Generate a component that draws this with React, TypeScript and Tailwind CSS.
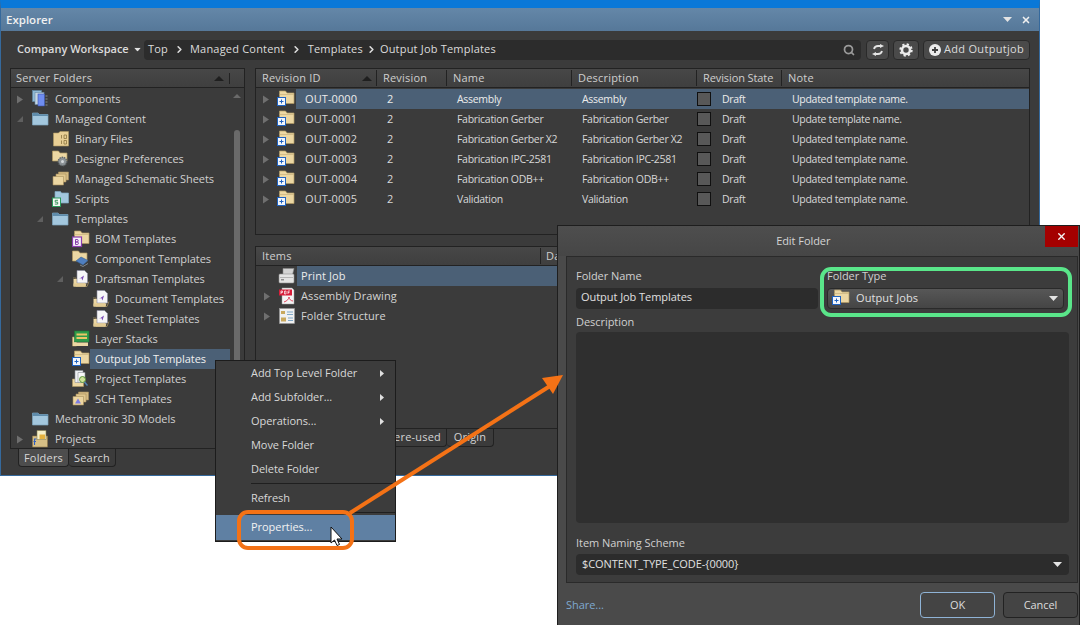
import { ChevronRight, Search, X } from 'lucide-react';

const font = '[font-family:"Open_Sans","Noto_Sans",sans-serif]';

type IconKind =
    | 'components' | 'blue' | 'binary' | 'prefs' | 'sheets' | 'scripts' | 'bom' | 'comp'
    | 'draftsman' | 'doc' | 'layers' | 'out' | 'project' | 'sch' | 'projects'
    | 'print' | 'pdf' | 'struct';

const Yellow = () => (
    <>
        <path d="M2.500 1h6l1.500 2h7v10.500H2.500z" fill="#ecd7a3" stroke="#b09862" strokeWidth="0.700" />
        <path d="M2.500 4.500h14.500" stroke="#c8b27c" strokeWidth="0.700" />
    </>
);

const Blue = () => (
    <>
        <path d="M0.500 3h5.500l1 1.500h9v10.500H0.500z" fill="#a3c7de" stroke="#7ea6c0" strokeWidth="0.700" />
        <path d="M0.500 3h5.500l1 1.500h9v1.500H0.500z" fill="#5f8cab" />
    </>
);

const Paper = () => (
    <>
        <path d="M1 8h3v8.500h11l2-5" fill="none" stroke="#b09862" strokeWidth="0.700" />
        <path d="M1.500 9h12v7.500H1.500z" fill="#ecd7a3" />
        <path d="M5 0.500h7.500l3 3V13H5z" fill="#f6f6f8" stroke="#8a8aa0" strokeWidth="0.600" />
        <path d="M7 9l5-3.500-1.500 5-1.200-2.500z" fill="#7a4bb5" />
        <path d="M1.500 13.500h13l-1 3h-12z" fill="#e2cb94" />
    </>
);

const Icon = ({ kind }: { kind: IconKind }) => (
    <svg width="18" height="18" viewBox="0 0 18 18" className="shrink-0">
        {kind === 'components' && (
            <>
                <rect x="0.500" y="0.500" width="9" height="11" fill="#8fb9d6" stroke="#5e86a3" strokeWidth="0.600" />
                <rect x="3" y="2.500" width="9" height="12" fill="#c6d6e2" stroke="#6a8aa5" strokeWidth="0.600" />
                <rect x="6" y="4" width="6.500" height="12" fill="#6f8df0" stroke="#3a53b0" strokeWidth="0.600" />
                <path d="M13.500 6h2M13.500 9h2M13.500 12h2M13.500 15h2" stroke="#9aa4a8" strokeWidth="0.800" />
            </>
        )}
        {kind === 'blue' && <Blue />}
        {kind === 'binary' && (
            <>
                <path d="M1.500 3h5l1.500-1.500h8.500V16H1.500z" fill="#e8cf95" stroke="#b09862" strokeWidth="0.600" />
                <path d="M9.500 5v3.500M12 5h2.500v3.500H12zM9.500 10.500V14M12 10.500h2.500V14H12z" fill="none" stroke="#8c7540" strokeWidth="0.800" />
            </>
        )}
        {kind === 'prefs' && (
            <>
                <path d="M0.500 1h6l1.500 2h7v8H0.500z" fill="#ecd7a3" stroke="#b09862" strokeWidth="0.700" />
                <circle cx="10.500" cy="11.500" r="4.200" fill="#8d9397" stroke="#62686b" strokeWidth="1.400" strokeDasharray="1.500 0.800" />
                <circle cx="10.500" cy="11.500" r="1.500" fill="#d4d8da" />
            </>
        )}
        {(kind === 'sheets' || kind === 'sch') && (
            <>
                <path d="M6.500 2h10v8h-10z" fill="#d5bb84" stroke="#a88f5c" strokeWidth="0.600" />
                <path d="M4 4h10v8H4z" fill="#e0c78e" stroke="#a88f5c" strokeWidth="0.600" />
                <path d="M1 6.500h10.500v8.500H1z" fill="#ecd6a2" stroke="#a88f5c" strokeWidth="0.600" />
                {kind === 'sch' && <path d="M3 13.500l3-5 3 5z" fill="#7d7de0" />}
            </>
        )}
        {kind === 'scripts' && (
            <>
                <path d="M3 1.500h5.500l1 1.500H16.500v10H3z" fill="#a3c7de" stroke="#7ea6c0" strokeWidth="0.700" />
                <rect x="0.500" y="8" width="8" height="8.500" fill="#f4f8f4" stroke="#2b9a5a" strokeWidth="1" />
                <path d="M6 10.300H3.200v1.900h2.500v1.900H2.800" fill="none" stroke="#2b8a50" strokeWidth="0.900" />
            </>
        )}
        {kind === 'bom' && (
            <>
                <Yellow />
                <rect x="0.500" y="7" width="9" height="9.500" fill="#f6f0fa" stroke="#8a3fb0" strokeWidth="1.200" />
                <path d="M3.500 9.500v5h1.700a1.200 1.200 0 0 0 0-2.500H3.500h1.500a1.200 1.200 0 0 0 0-2.500z" fill="none" stroke="#7a2fa0" strokeWidth="0.900" />
            </>
        )}
        {kind === 'comp' && (
            <>
                <path d="M0.500 1h6l1.500 2h7v8H0.500z" fill="#ecd7a3" stroke="#b09862" strokeWidth="0.700" />
                <path d="M4 11l5-4 7 3.500-5 4.500z" fill="#4f7fc0" stroke="#38608f" strokeWidth="0.600" />
                <path d="M8 15l3 1.500 5-3" fill="none" stroke="#7f8890" strokeWidth="1" />
            </>
        )}
        {(kind === 'draftsman' || kind === 'doc') && <Paper />}
        {kind === 'layers' && (
            <>
                <path d="M0.500 7h4v9H0.500z" fill="#ecd7a3" stroke="#b09862" strokeWidth="0.600" />
                <rect x="2.500" y="1" width="14.500" height="11" fill="#2f9a4a" stroke="#1d7434" strokeWidth="0.600" />
                <path d="M4.500 4.500h10.500M4.500 8h10.500" stroke="#ecc566" strokeWidth="2" />
                <path d="M1 12.500h15v3.500H1z" fill="#ecd7a3" />
            </>
        )}
        {kind === 'out' && (
            <>
                <Yellow />
                <rect x="0.500" y="7.500" width="8" height="8" fill="#f2f6fc" stroke="#1f62c0" strokeWidth="1" />
                <path d="M2.500 11.500h4M4.500 9.500v4" stroke="#1f62c0" strokeWidth="1" />
            </>
        )}
        {kind === 'project' && (
            <>
                <path d="M0.500 9h11v7.500H0.500z" fill="#ecd7a3" stroke="#b09862" strokeWidth="0.600" />
                <path d="M3 0.500h8v12H3z" fill="#eef0f2" stroke="#8a8f96" strokeWidth="0.600" />
                <path d="M6 2.500h7v10H6z" fill="#f8f8f8" stroke="#8a8f96" strokeWidth="0.600" />
                <circle cx="10.500" cy="9.500" r="3" fill="#cfe29a" stroke="#4f8f2f" strokeWidth="0.900" />
                <path d="M12.500 12l3 3.500" stroke="#4f7faf" strokeWidth="1.500" />
            </>
        )}
        {kind === 'projects' && (
            <>
                <path d="M0.500 6h15v11h-15z" fill="#d6bf86" stroke="#8f7748" strokeWidth="0.600" />
                <path d="M5 0.500h9v9H5z" fill="#f6f0c8" stroke="#8a7f50" strokeWidth="0.600" />
                <rect x="7.500" y="4.500" width="5.500" height="4.500" fill="#e5b23e" />
                <path d="M4.500 9H2.500v6M1.500 11.500H4" fill="none" stroke="#2f5fc0" strokeWidth="1.100" />
            </>
        )}
        {kind === 'print' && (
            <>
                <path d="M5 1.500h11l-1.500 6H5z" fill="#d4d4d4" stroke="#8f8f8f" strokeWidth="0.600" />
                <rect x="1" y="7" width="15" height="9" rx="1" fill="#e4e4e4" stroke="#8f8f8f" strokeWidth="0.600" />
                <path d="M2 10.500h13" stroke="#a8a8a8" strokeWidth="0.800" />
                <rect x="3" y="12" width="3" height="1.500" fill="#8f8f8f" />
            </>
        )}
        {kind === 'pdf' && (
            <>
                <path d="M4 1h10l2 2v14H4z" fill="#f5f5f5" stroke="#a0a0a0" strokeWidth="0.500" />
                <rect x="1" y="2.500" width="13" height="6" fill="#d81e3a" />
                <path d="M3 7V4h1.500v1.500H3M6.500 4v3h1.500V4zM10 7V4h2M10 5.500h1.500" fill="none" stroke="#ffffff" strokeWidth="0.700" />
                <path d="M6 15c3-1 5-3 5-5 0 2 2 4 4 4" fill="none" stroke="#d81e3a" strokeWidth="0.800" />
            </>
        )}
        {kind === 'struct' && (
            <>
                <rect x="1.500" y="1.500" width="15" height="15" fill="#f0f0f0" stroke="#9a9a9a" strokeWidth="0.600" />
                <rect x="3" y="4" width="4" height="3" fill="#c9a85c" />
                <rect x="3" y="10.500" width="5" height="4" fill="#c9a85c" />
                <path d="M9 5h6M9 7.500h6M10 11h5M10 13.500h5" stroke="#7fa7c7" strokeWidth="1" />
            </>
        )}
    </svg>
);

const Tri = ({ open }: { open?: boolean }) =>
    open ? (
        <svg width="8" height="8" viewBox="0 0 8 8"><path d="M7 1v6H1z" fill="#5f5f5f" /></svg>
    ) : (
        <svg width="8" height="9" viewBox="0 0 8 9"><path d="M1 0.500l6 4-6 4z" fill="#6f6f6f" /></svg>
    );

const Caret = ({ className }: { className?: string }) => (
    <svg width="9" height="5" viewBox="0 0 9 5" className={className}><path d="M0 0h9L4.500 5z" fill="#e4e4e4" /></svg>
);

const SortUp = () => (
    <svg width="10" height="5" viewBox="0 0 10 5"><path d="M0 5h10L5 0z" fill="#1f1f1f" /></svg>
);

const indent = ['pl-0', 'pl-[20px]', 'pl-[40px]', 'pl-[60px]'];

const tree: { label: string; level: number; icon: IconKind; arrow?: 'open' | 'closed'; selected?: boolean }[] = [
    { label: 'Components', level: 0, icon: 'components', arrow: 'closed' },
    { label: 'Managed Content', level: 0, icon: 'blue', arrow: 'open' },
    { label: 'Binary Files', level: 1, icon: 'binary' },
    { label: 'Designer Preferences', level: 1, icon: 'prefs' },
    { label: 'Managed Schematic Sheets', level: 1, icon: 'sheets' },
    { label: 'Scripts', level: 1, icon: 'scripts' },
    { label: 'Templates', level: 1, icon: 'blue', arrow: 'open' },
    { label: 'BOM Templates', level: 2, icon: 'bom' },
    { label: 'Component Templates', level: 2, icon: 'comp' },
    { label: 'Draftsman Templates', level: 2, icon: 'draftsman', arrow: 'open' },
    { label: 'Document Templates', level: 3, icon: 'doc' },
    { label: 'Sheet Templates', level: 3, icon: 'doc' },
    { label: 'Layer Stacks', level: 2, icon: 'layers' },
    { label: 'Output Job Templates', level: 2, icon: 'out', selected: true },
    { label: 'Project Templates', level: 2, icon: 'project' },
    { label: 'SCH Templates', level: 2, icon: 'sch' },
    { label: 'Mechatronic 3D Models', level: 0, icon: 'blue' },
    { label: 'Projects', level: 0, icon: 'projects', arrow: 'closed' },
];

const revisions = [
    ['OUT-0000', 'Assembly', 'Assembly', 'Updated template name.'],
    ['OUT-0001', 'Fabrication Gerber', 'Fabrication Gerber', 'Update template name.'],
    ['OUT-0002', 'Fabrication Gerber X2', 'Fabrication Gerber X2', 'Updated template name.'],
    ['OUT-0003', 'Fabrication IPC-2581', 'Fabrication IPC-2581', 'Updated template name.'],
    ['OUT-0004', 'Fabrication ODB++', 'Fabrication ODB++', 'Updated template name.'],
    ['OUT-0005', 'Validation', 'Validation', 'Updated template name.'],
];

const items: { label: string; icon: IconKind; arrow?: boolean; selected?: boolean }[] = [
    { label: 'Print Job', icon: 'print', selected: true },
    { label: 'Assembly Drawing', icon: 'pdf', arrow: true },
    { label: 'Folder Structure', icon: 'struct', arrow: true },
];

const menuItems = [
    { label: 'Add Top Level Folder', sub: true },
    { label: 'Add Subfolder...', sub: true },
    { label: 'Operations...', sub: true },
    { label: 'Move Folder' },
    { label: 'Delete Folder' },
];

const headerBg = 'bg-gradient-to-b from-[#474747] to-[#3f3f3f]';
const toolBtn = 'h-[20px] flex items-center justify-center rounded-[4px] border border-[#2a2a2a] bg-[#4a4a4a]';

const Explorer = () => (
    <div className="absolute left-0 top-0 w-[1040px] h-[476px] flex flex-col border-x border-b border-[#35699c] border-t-[8px] border-t-[#0a78d8] bg-[#3b3b3b]">
        {/* Title */}
        <div className="h-[23px] shrink-0 flex items-center justify-between pl-[5px] pr-[8px] bg-gradient-to-b from-[#6487a8] to-[#567899]">
            <span className="text-[11.500px] font-semibold text-[#f0f0f0]">Explorer</span>
            <div className="flex items-center gap-[9px]">
                <Caret />
                <X className="w-[10px] h-[10px] text-[#f0f0f0]" strokeWidth={4} />
            </div>
        </div>

        {/* Toolbar */}
        <div className="h-[37px] shrink-0 flex items-center pl-[16px] pr-[9px]">
            <span className="w-[116px] text-[11px] font-semibold text-[#dcdcdc]">Company Workspace</span>
            <Caret className="scale-75" />
            <div className="ml-[2px] w-[717px] h-[20px] flex items-center justify-between pl-[4px] pr-[3px] rounded-[4px] bg-[#2c2c2c] text-[11px] text-[#dcdcdc] tracking-[0.2px]">
                <div className="flex items-center">
                    <span>Top</span>
                    <ChevronRight className="w-[11px] h-[11px] ml-[6px] mr-[5px]" strokeWidth={3.500} />
                    <span>Managed Content</span>
                    <ChevronRight className="w-[11px] h-[11px] mx-[6px]" strokeWidth={3.500} />
                    <span>Templates</span>
                    <ChevronRight className="w-[11px] h-[11px] mx-[3px]" strokeWidth={3.500} />
                    <span>Output Job Templates</span>
                </div>
                <Search className="w-[12px] h-[12px] mr-[3px] text-[#9a9a9a]" strokeWidth={3.500} />
            </div>
            <button className={`ml-[5px] w-[23px] ${toolBtn}`}>
                <svg width="14" height="12" viewBox="0 0 14 12" fill="none" stroke="#e6e6e6" strokeWidth="1.800">
                    <path d="M3 5c.5-2 2-3 4-3h3" />
                    <path d="M9 0l4 2-4 2z" fill="#e6e6e6" stroke="none" />
                    <path d="M11 7c-.5 2-2 3-4 3H4" />
                    <path d="M5 8l-4 2 4 2z" fill="#e6e6e6" stroke="none" />
                </svg>
            </button>
            <button className={`ml-[4px] w-[26px] ${toolBtn}`}>
                <svg width="14" height="14" viewBox="0 0 14 14" fill="none" stroke="#ececec">
                    <circle cx="7" cy="7" r="4" strokeWidth="2.600" />
                    <circle cx="7" cy="7" r="5.700" strokeWidth="2" strokeDasharray="2.200 2.280" />
                </svg>
            </button>
            <button className={`ml-[4px] w-[107px] gap-[3px] text-[11px] text-[#dcdcdc] tracking-[0.3px] ${toolBtn}`}>
                <svg width="12" height="12" viewBox="0 0 12 12">
                    <circle cx="6" cy="6" r="6" fill="#ececec" />
                    <path d="M6 3v6M3 6h6" stroke="#3f3f3f" strokeWidth="1.800" />
                </svg>
                Add Outputjob
            </button>
        </div>

        <div className="flex-1 flex gap-[10px] px-[9px] min-h-0">
            {/* Server folders */}
            <div className="w-[235px] shrink-0 flex flex-col">
                <div className="h-[381px] flex flex-col border border-[#222222]">
                    <div className={`h-[19px] shrink-0 flex items-center border-b border-[#222222] pl-[5px] text-[11px] text-[#cfcfcf] tracking-[0.2px] ${headerBg}`}>
                        <span className="flex-1">Server Folders</span>
                        <SortUp />
                        <div className="ml-[5px] mr-[14px] w-px h-[11px] bg-[#222222]" />
                    </div>
                    <div className="flex-1 flex min-h-0">
                        <div className="flex-1 pt-[1px] min-w-0">
                            {tree.map((row) => (
                                <div key={row.label} className={`h-[20px] flex items-center text-[11px] tracking-[-0.05px] ${indent[row.level]}`}>
                                    <span className="w-[18px] shrink-0 flex justify-center">
                                        {row.arrow && <Tri open={row.arrow === 'open'} />}
                                    </span>
                                    <span className="ml-[3px] flex">
                                        <Icon kind={row.icon} />
                                    </span>
                                    <span className={`flex-1 h-full flex items-center pl-[5px] ${row.selected ? 'bg-[#4b6076] text-[#f0f0f0]' : 'text-[#d0d0d0]'}`}>
                                        {row.label}
                                    </span>
                                </div>
                            ))}
                        </div>
                        <div className="w-[14px] shrink-0 flex flex-col items-center pt-[6px]">
                            <svg width="8" height="4" viewBox="0 0 8 4"><path d="M0 4h8L4 0z" fill="#6a6a6a" /></svg>
                            <div className="mt-[32px] w-[6px] h-[283px] bg-[#6a6a6a] rounded-[3px]" />
                        </div>
                    </div>
                </div>
                <div className="flex pl-[8px] text-[11px] text-[#d8d8d8] tracking-[0.2px]">
                    <div className="w-[51px] h-[18px] pt-[1px] flex items-center justify-center bg-[#4d4d4d] border border-t-0 border-[#222222] rounded-b-[4px]">Folders</div>
                    <div className="w-[47px] h-[18px] pt-[1px] flex items-center justify-center bg-[#3b3b3b] border border-l-0 border-t-0 border-[#222222] rounded-b-[4px]">Search</div>
                </div>
            </div>

            <div className="flex-1 flex flex-col min-w-0">
                {/* Revisions */}
                <div className="h-[167px] shrink-0 flex flex-col border border-[#222222]">
                    <div className={`h-[19px] shrink-0 flex items-center border-b border-[#222222] text-[11px] text-[#cfcfcf] tracking-[0.2px] ${headerBg}`}>
                        <div className="w-[121px] flex items-center pl-[6px] pr-[4px] justify-between border-r border-[#222222]">Revision ID<SortUp /></div>
                        <div className="w-[70px] pl-[6px] border-r border-[#222222]">Revision</div>
                        <div className="w-[125px] pl-[6px] border-r border-[#222222]">Name</div>
                        <div className="w-[125px] pl-[6px] border-r border-[#222222]">Description</div>
                        <div className="w-[85px] pl-[6px] border-r border-[#222222] whitespace-nowrap tracking-[-0.1px]">Revision State</div>
                        <div className="pl-[6px]">Note</div>
                    </div>
                    <div className="pt-[1px] text-[10.500px] tracking-[-0.3px] text-[#d8d8d8]">
                        {revisions.map((r, i) => (
                            <div key={r[0]} className="h-[20px] flex items-center">
                                <div className="w-[40px] shrink-0 flex items-center pl-[6px]">
                                    <Tri />
                                    <span className="ml-[7px] flex"><Icon kind="out" /></span>
                                </div>
                                <div className={`flex-1 h-full flex items-center ${i === 0 ? 'bg-[#4b6076] text-[#ececec]' : ''}`}>
                                    <div className="w-[81px] pl-[9px] text-[11px] tracking-[0.1px]">{r[0]}</div>
                                    <div className="w-[70px] pl-[10px] text-[11px]">2</div>
                                    <div className="w-[125px] pl-[10px] pt-[1px] whitespace-nowrap">{r[1]}</div>
                                    <div className="w-[125px] pl-[10px] pt-[1px] whitespace-nowrap">{r[2]}</div>
                                    <div className="w-[85px] flex items-center">
                                        <span className="w-[14px] h-[14px] bg-[#585858] border border-[#101010]" />
                                        <span className="ml-[11px] pt-[1px]">Draft</span>
                                    </div>
                                    <div className="pl-[10px] pt-[1px] whitespace-nowrap">{r[3]}</div>
                                </div>
                            </div>
                        ))}
                    </div>
                </div>

                <div className="h-[11px] shrink-0" />

                {/* Items */}
                <div className="h-[183px] shrink-0 flex flex-col border border-[#222222]">
                    <div className={`h-[19px] shrink-0 flex items-center border-b border-[#222222] text-[11px] text-[#cfcfcf] tracking-[0.2px] ${headerBg}`}>
                        <div className="w-[285px] pl-[6px] border-r border-[#222222]">Items</div>
                        <div className="pl-[5px]">Date</div>
                    </div>
                    <div className="text-[11px] text-[#d4d4d4] tracking-[0.1px]">
                        {items.map((it) => (
                            <div key={it.label} className="h-[20px] flex items-center">
                                <div className="w-[41px] shrink-0 flex items-center pl-[7px]">
                                    <span className="w-[8px] flex">{it.arrow && <Tri />}</span>
                                    <span className="ml-[7px] flex"><Icon kind={it.icon} /></span>
                                </div>
                                <div className={`flex-1 h-full flex items-center pl-[4px] ${it.selected ? 'bg-[#4b6076] text-[#ececec]' : ''}`}>{it.label}</div>
                            </div>
                        ))}
                    </div>
                </div>

                <div className="flex pl-[60px] text-[11px] text-[#d4d4d4] tracking-[0.2px]">
                    <div className="w-[55px] h-[18px] bg-[#4d4d4d] border border-t-0 border-[#222222] rounded-b-[4px] flex items-center justify-center">Preview</div>
                    <div className="w-[77px] h-[18px] border border-l-0 border-t-0 border-[#222222] rounded-b-[4px] flex items-center justify-end pr-[5px] whitespace-nowrap">Where-used</div>
                    <div className="w-[47px] h-[18px] border border-l-0 border-t-0 border-[#222222] rounded-b-[4px] flex items-center justify-center">Origin</div>
                </div>
            </div>
        </div>
    </div>
);

const ContextMenu = () => (
    <div className="absolute left-[215px] top-[360px] w-[181px] h-[182px] flex flex-col border border-[#1c1c1c] bg-[#3c3c3c] text-[11px] text-[#d8d8d8] tracking-[-0.05px]">
        {menuItems.map((m) => (
            <div key={m.label} className="h-[24px] shrink-0 flex items-center justify-between pl-[35px] pr-[11px]">
                {m.label}
                {m.sub && <svg width="4" height="7" viewBox="0 0 4 7"><path d="M0 0l4 3.500-4 3.500z" fill="#e0e0e0" /></svg>}
            </div>
        ))}
        <div className="ml-[35px] h-px mt-[2px] shrink-0 bg-[#1f1f1f]" />
        <div className="h-[28px] shrink-0 flex items-center pl-[35px]">Refresh</div>
        <div className="ml-[35px] h-px shrink-0 bg-[#1f1f1f]" />
        <div className="mt-[2px] h-[25px] shrink-0 flex items-center pl-[35px] bg-[#5f80a3] text-[#f2f2f2]">Properties...</div>
    </div>
);

const Field = 'rounded-[4px] bg-[#2c2c2c] text-[11px] text-[#e0e0e0]';

const EditFolder = () => (
    <div className="absolute left-[557px] top-[225px] w-[523px] h-[401px] flex flex-col border border-[#1e1e1e] bg-[#4a4a4a] text-[11px] tracking-[-0.05px]">
        <div className="h-[30px] shrink-0 flex items-start justify-between pr-[1px] bg-gradient-to-b from-[#4e4e4e] to-[#464646]">
            <span className="w-[495px] pl-[4px] pt-[7px] text-center text-[#d4d4d4]">Edit Folder</span>
            <div className="w-[34px] h-[21px] flex items-center justify-center bg-[#a40000]">
                <X className="w-[11px] h-[11px] text-[#f6f6f6]" strokeWidth={3} />
            </div>
        </div>
        <div className="ml-[8px] mr-[1px] h-[327px] shrink-0 flex flex-col border border-[#2a2a2a] bg-[#3c3c3c] pl-[9px] pr-[8px] text-[#d0d0d0]">
            <div className="flex pt-[12px] gap-[9px]">
                <div className="w-[242px] flex flex-col">
                    <span className="h-[19px] leading-[14px]">Folder Name</span>
                    <div className={`h-[21px] flex items-center pl-[5px] pb-[2px] ${Field}`}>Output Job Templates</div>
                </div>
                <div className="flex-1 pr-[5px] flex flex-col">
                    <span className="h-[19px] leading-[14px]">Folder Type</span>
                    <div className="h-[21px] flex items-center pl-[4px] pr-[5px] pb-[1px] rounded-[4px] border border-[#2a2a2a] bg-gradient-to-b from-[#575757] to-[#454545] text-[#e0e0e0]">
                        <Icon kind="out" />
                        <span className="ml-[6px] flex-1 tracking-[0.1px]">Output Jobs</span>
                        <Caret />
                    </div>
                </div>
            </div>
            <span className="mt-[6px] h-[17px] leading-[14px]">Description</span>
            <div className="h-[191px] shrink-0 rounded-[4px] bg-[#2f2f2f]" />
            <span className="mt-[13px] h-[18px] leading-[14px]">Item Naming Scheme</span>
            <div className={`h-[21px] flex items-center justify-between pl-[6px] pr-[7px] ${Field}`}>
                $CONTENT_TYPE_CODE-{'{0000}'}
                <Caret />
            </div>
        </div>
        <div className="flex-1 flex items-center pl-[8px] pr-[1px] pt-[2px] text-[#dcdcdc]">
            <span className="flex-1 text-[#7fa9d0]">Share...</span>
            <button className="w-[75px] h-[26px] rounded-[4px] border border-[#8fb3d6] bg-[#444444]">OK</button>
            <button className="ml-[8px] w-[75px] h-[26px] rounded-[4px] border border-[#222222] bg-[#444444]">Cancel</button>
        </div>
    </div>
);

const Overlays = () => (
    <>
        {/* Orange callout + arrow */}
        <div className="absolute left-[237px] top-[510px] w-[117px] h-[40px] rounded-[11px] border-[4px] border-[#f47216]" />
        <svg className="absolute left-0 top-0 pointer-events-none" width="1087" height="625" viewBox="0 0 1087 625">
            <path d="M350 513L550 386" stroke="#f47216" strokeWidth="4" fill="none" />
            <path d="M563 375L542 378L553 394z" fill="#f47216" />
            {/* mouse pointer */}
            <path d="M331 527v16l3.500-3 2.500 5.500 2.500-1-2.500-5.500h5z" fill="#ffffff" stroke="#111111" strokeWidth="1" />
        </svg>
        {/* Green callout */}
        <div className="absolute left-[820px] top-[267px] w-[252px] h-[50px] rounded-[11px] border-[4px] border-[#5ae68a]" />
    </>
);

export default function App() {
    return (
        <div className={`relative w-[1087px] h-[625px] overflow-hidden bg-white ${font}`}>
            <Explorer />
            <ContextMenu />
            <EditFolder />
            <Overlays />
        </div>
    );
}
